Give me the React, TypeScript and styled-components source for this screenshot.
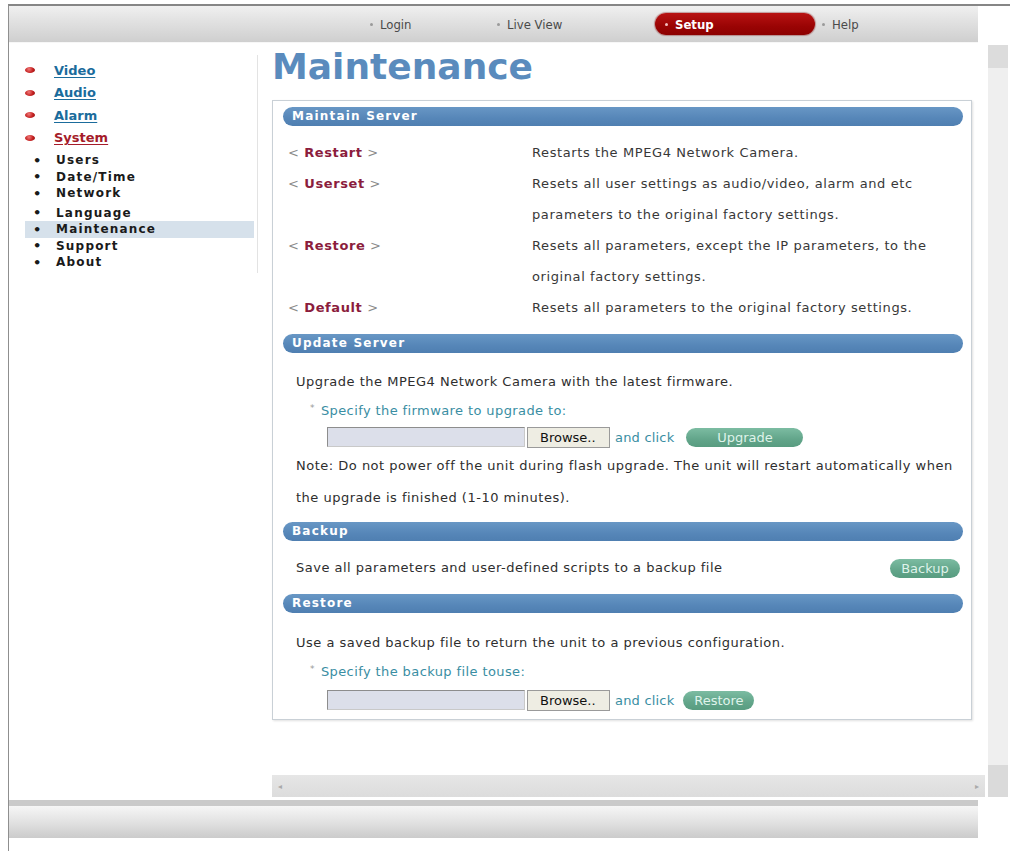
import React from "react";
import styled, { createGlobalStyle } from "styled-components";

const GlobalStyle = createGlobalStyle`
  html, body {
    margin: 0;
    padding: 0;
    background: #ffffff;
  }
  body {
    font-family: "DejaVu Sans", Verdana, sans-serif;
    color: #333;
  }
`;

const Page = styled.div`
  width: 1015px;
  height: 851px;
  box-sizing: border-box;
  padding: 4px 0 0 8px;
  background: #fff;
  overflow: hidden;
`;

const Frame = styled.div`
  width: 1002px;
  height: 847px;
  box-sizing: border-box;
  border-top: 2px solid #868686;
  border-left: 1px solid #8f8f8f;
  display: flex;
  flex-direction: column;
`;

const TopBar = styled.div`
  width: 969px;
  height: 37px;
  box-sizing: border-box;
  background: linear-gradient(#f0f0f0, #e2e2e2 40%, #cfcfcf);
  border-bottom: 1px solid #f7f7f7;
  display: flex;
  align-items: center;
  padding-left: 361px;
`;

const NavItem = styled.div<{ $w: number; $active?: boolean; $ml?: number }>`
  width: ${(p) => p.$w}px;
  height: 22px;
  margin-left: ${(p) => p.$ml || 0}px;
  box-sizing: border-box;
  display: flex;
  align-items: center;
  padding-left: ${(p) => (p.$active ? 10 : 0)}px;
  font-family: "DejaVu Sans Condensed", "DejaVu Sans", sans-serif;
  font-size: 13px;
  font-weight: ${(p) => (p.$active ? "bold" : "normal")};
  color: ${(p) => (p.$active ? "#fff" : "#4a4a4a")};
  border-radius: 11px;
  background: ${(p) => (p.$active ? "linear-gradient(#b81212, #9a0404 60%, #8c0000)" : "transparent")};
  box-shadow: ${(p) => (p.$active ? "0 0 1px 1px rgba(120,0,0,0.35)" : "none")};
`;

const NavDot = styled.span<{ $active?: boolean }>`
  display: inline-block;
  width: 3px;
  height: 3px;
  border-radius: 50%;
  background: ${(p) => (p.$active ? "#f3c0c0" : "#9a9a9a")};
  margin-right: 7px;
`;

const BodyRow = styled.div`
  display: flex;
  height: 728px;
`;

const Sidebar = styled.div`
  width: 250px;
  padding-top: 12px;
  box-sizing: border-box;
`;

const NavBox = styled.div`
  width: 249px;
  box-sizing: border-box;
  border-right: 1px solid #e3e3e3;
  padding: 4px 0 2px 16px;
`;

const MainLink = styled.div<{ $red?: boolean }>`
  height: 22.5px;
  display: flex;
  align-items: center;
  font-size: 13px;
  font-weight: bold;
  color: ${(p) => (p.$red ? "#a51c2a" : "#1b6c9c")};

  & > span {
    text-decoration: underline;
    text-underline-offset: 2px;
  }
`;

const RedPill = styled.i`
  display: inline-block;
  width: 10px;
  height: 6px;
  border-radius: 50%;
  background: radial-gradient(circle at 40% 35%, #f07a7a, #c42020 55%, #8a0f0f);
  margin-right: 19px;
`;

const SubList = styled.div`
  margin-top: 3px;
`;

const SubItem = styled.div<{ $active?: boolean; $gap?: number }>`
  height: 16.5px;
  width: 229px;
  margin-top: ${(p) => p.$gap || 0}px;
  display: flex;
  align-items: center;
  padding-left: 8px;
  box-sizing: border-box;
  font-size: 12px;
  font-weight: bold;
  letter-spacing: 1.2px;
  color: #1a1a1a;
  background: ${(p) => (p.$active ? "#d6e1eb" : "transparent")};

  &::before {
    content: "•";
    font-size: 13px;
    width: 23px;
    letter-spacing: 0;
  }
`;

const Main = styled.div`
  width: 700px;
  margin-left: 13px;
`;

const Title = styled.h1`
  margin: 4px 0 13px 0;
  font-size: 36px;
  line-height: 40px;
  font-weight: bold;
  color: #5a8bbd;
  letter-spacing: 0;
`;

const Panel = styled.div`
  width: 700px;
  height: 620px;
  box-sizing: border-box;
  border: 1px solid #c9d0d6;
  box-shadow: 1px 1px 2px rgba(0, 0, 0, 0.12);
  padding: 6px 8px 8px 10px;
`;

const SectionBar = styled.div<{ $mb: number }>`
  height: 19px;
  border-radius: 10px;
  background: linear-gradient(#6897c5, #5686b8 60%, #4f7fb1);
  color: #fff;
  font-size: 12px;
  font-weight: bold;
  letter-spacing: 1.2px;
  line-height: 19px;
  padding-left: 9px;
  margin-bottom: ${(p) => p.$mb}px;
`;

const ActionGrid = styled.div`
  display: grid;
  grid-template-columns: 244px 1fr;
  grid-auto-rows: 31px;
  align-items: center;
  padding-left: 5px;
  margin-bottom: 11px;
`;

const ActionLabel = styled.div`
  font-size: 13px;
  color: #8a8a8a;
  letter-spacing: 0.6px;

  & > b {
    color: #8b1d3d;
  }
`;

const Desc = styled.div`
  font-size: 13px;
  letter-spacing: 0.6px;
  color: #383838;
  white-space: nowrap;
`;

const SectionBody = styled.div<{ $mb: number }>`
  padding-left: 13px;
  margin-bottom: ${(p) => p.$mb}px;
`;

const TextLine = styled.div<{ $h: number }>`
  height: ${(p) => p.$h}px;
  line-height: ${(p) => p.$h}px;
  font-size: 13px;
  letter-spacing: 0.5px;
  color: #2e2e2e;
  white-space: nowrap;
`;

const Hint = styled.div`
  height: 28px;
  line-height: 28px;
  padding-left: 14px;
  font-size: 13px;
  letter-spacing: 0.4px;
  color: #3a8ea3;

  &::before {
    content: "*";
    font-size: 9px;
    color: #999;
    vertical-align: top;
    margin-right: 6px;
    position: relative;
    top: -3px;
  }
`;

const UploadRow = styled.div<{ $mt: number }>`
  height: 22px;
  margin-top: ${(p) => p.$mt}px;
  padding-left: 31px;
  display: flex;
  align-items: center;
`;

const FileBox = styled.div`
  width: 198px;
  height: 20px;
  box-sizing: border-box;
  background: #dcdfea;
  border: 1px solid #8d8d8d;
  border-right-color: #c9c9c9;
  border-bottom-color: #c9c9c9;
`;

const BrowseButton = styled.div`
  width: 83px;
  height: 21px;
  margin-left: 2px;
  box-sizing: border-box;
  background: #eeede3;
  border: 1px solid #9a9a9a;
  font-size: 13px;
  line-height: 19px;
  color: #111;
  padding-left: 12px;
`;

const AndClick = styled.span`
  margin-left: 5px;
  font-size: 13px;
  letter-spacing: 0.2px;
  color: #3a8ea3;
`;

const PillButton = styled.div<{ $w: number; $ml?: number }>`
  width: ${(p) => p.$w}px;
  height: 19px;
  margin-left: ${(p) => p.$ml || 0}px;
  border-radius: 10px;
  background: linear-gradient(#7cbca2, #62a58a 60%, #589c80);
  color: #dff3ea;
  font-size: 13px;
  line-height: 19px;
  text-align: center;
`;

const BackupRow = styled.div`
  height: 30px;
  margin-bottom: 11px;
  padding: 0 3px 0 13px;
  display: flex;
  align-items: center;
  justify-content: space-between;
`;

const VScroll = styled.div`
  width: 20px;
  height: 722px;
  margin: 2px 2px 0 auto;
  background: #efefef;
  display: flex;
  flex-direction: column;
`;

const ScrollThumb = styled.div`
  height: 23px;
  background: #dcdcdc;
`;

const ScrollRow = styled.div`
  display: flex;
  height: 22px;
  margin-top: 4px;
  padding-left: 263px;
`;

const HScroll = styled.div`
  width: 713px;
  height: 22px;
  background: linear-gradient(#e6e6e6, #dcdcdc);
  display: flex;
  align-items: center;
  justify-content: space-between;
  font-size: 8px;
  color: #aaa;
  padding: 0 6px;
  box-sizing: border-box;
`;

const ScrollCorner = styled.div`
  width: 20px;
  height: 32px;
  margin: -10px 0 0 3px;
  background: #dadada;
`;

const BottomBar = styled.div`
  width: 969px;
  height: 38px;
  margin-top: 3px;
  box-sizing: border-box;
  border-top: 6px solid #cacaca;
  background: linear-gradient(#f6f6f6, #e4e4e4 45%, #cbcbcb);
`;

const mainLinks = [
  { label: "Video" },
  { label: "Audio" },
  { label: "Alarm" },
  { label: "System", red: true },
];

const subLinks = [
  { label: "Users" },
  { label: "Date/Time" },
  { label: "Network" },
  { label: "Language", gap: 3 },
  { label: "Maintenance", active: true },
  { label: "Support" },
  { label: "About" },
];

const actions: { name?: string; text: string }[] = [
  { name: "Restart", text: "Restarts the MPEG4 Network Camera." },
  { name: "Userset", text: "Resets all user settings as audio/video, alarm and etc" },
  { text: "parameters to the original factory settings." },
  { name: "Restore", text: "Resets all parameters, except the IP parameters, to the" },
  { text: "original factory settings." },
  { name: "Default", text: "Resets all parameters to the original factory settings." },
];

export default function App() {
  return (
    <Page>
      <GlobalStyle />
      <Frame>
        <TopBar>
          <NavItem $w={127}>
            <NavDot />
            Login
          </NavItem>
          <NavItem $w={158}>
            <NavDot />
            Live View
          </NavItem>
          <NavItem $w={160} $active>
            <NavDot $active />
            Setup
          </NavItem>
          <NavItem $w={60} $ml={7}>
            <NavDot />
            Help
          </NavItem>
        </TopBar>

        <BodyRow>
          <Sidebar>
            <NavBox>
              {mainLinks.map((l) => (
                <MainLink key={l.label} $red={l.red}>
                  <RedPill />
                  <span>{l.label}</span>
                </MainLink>
              ))}
              <SubList>
                {subLinks.map((l) => (
                  <SubItem key={l.label} $active={l.active} $gap={l.gap}>
                    {l.label}
                  </SubItem>
                ))}
              </SubList>
            </NavBox>
          </Sidebar>

          <Main>
            <Title>Maintenance</Title>
            <Panel>
              <SectionBar $mb={11}>Maintain Server</SectionBar>
              <ActionGrid>
                {actions.map((a, i) => (
                  <React.Fragment key={i}>
                    <ActionLabel>
                      {a.name && (
                        <>
                          &lt; <b>{a.name}</b> &gt;
                        </>
                      )}
                    </ActionLabel>
                    <Desc>{a.text}</Desc>
                  </React.Fragment>
                ))}
              </ActionGrid>

              <SectionBar $mb={14}>Update Server</SectionBar>
              <SectionBody $mb={8}>
                <TextLine $h={30}>Upgrade the MPEG4 Network Camera with the latest firmware.</TextLine>
                <Hint>Specify the firmware to upgrade to:</Hint>
                <UploadRow $mt={1}>
                  <FileBox />
                  <BrowseButton>Browse..</BrowseButton>
                  <AndClick>and click</AndClick>
                  <PillButton $w={117} $ml={12}>
                    Upgrade
                  </PillButton>
                </UploadRow>
                <TextLine $h={32} style={{ marginTop: 2 }}>
                  Note: Do not power off the unit during flash upgrade. The unit will restart automatically when
                </TextLine>
                <TextLine $h={32}>the upgrade is finished (1-10 minutes).</TextLine>
              </SectionBody>

              <SectionBar $mb={12}>Backup</SectionBar>
              <BackupRow>
                <TextLine $h={30}>Save all parameters and user-defined scripts to a backup file</TextLine>
                <PillButton $w={70}>Backup</PillButton>
              </BackupRow>

              <SectionBar $mb={15}>Restore</SectionBar>
              <SectionBody $mb={0}>
                <TextLine $h={30}>
                  Use a saved backup file to return the unit to a previous configuration.
                </TextLine>
                <Hint>Specify the backup file touse:</Hint>
                <UploadRow $mt={3}>
                  <FileBox />
                  <BrowseButton>Browse..</BrowseButton>
                  <AndClick>and click</AndClick>
                  <PillButton $w={71} $ml={9}>
                    Restore
                  </PillButton>
                </UploadRow>
              </SectionBody>
            </Panel>
          </Main>

          <VScroll>
            <ScrollThumb />
          </VScroll>
        </BodyRow>

        <ScrollRow>
          <HScroll>
            <span>◂</span>
            <span>▸</span>
          </HScroll>
          <ScrollCorner />
        </ScrollRow>

        <BottomBar />
      </Frame>
    </Page>
  );
}
